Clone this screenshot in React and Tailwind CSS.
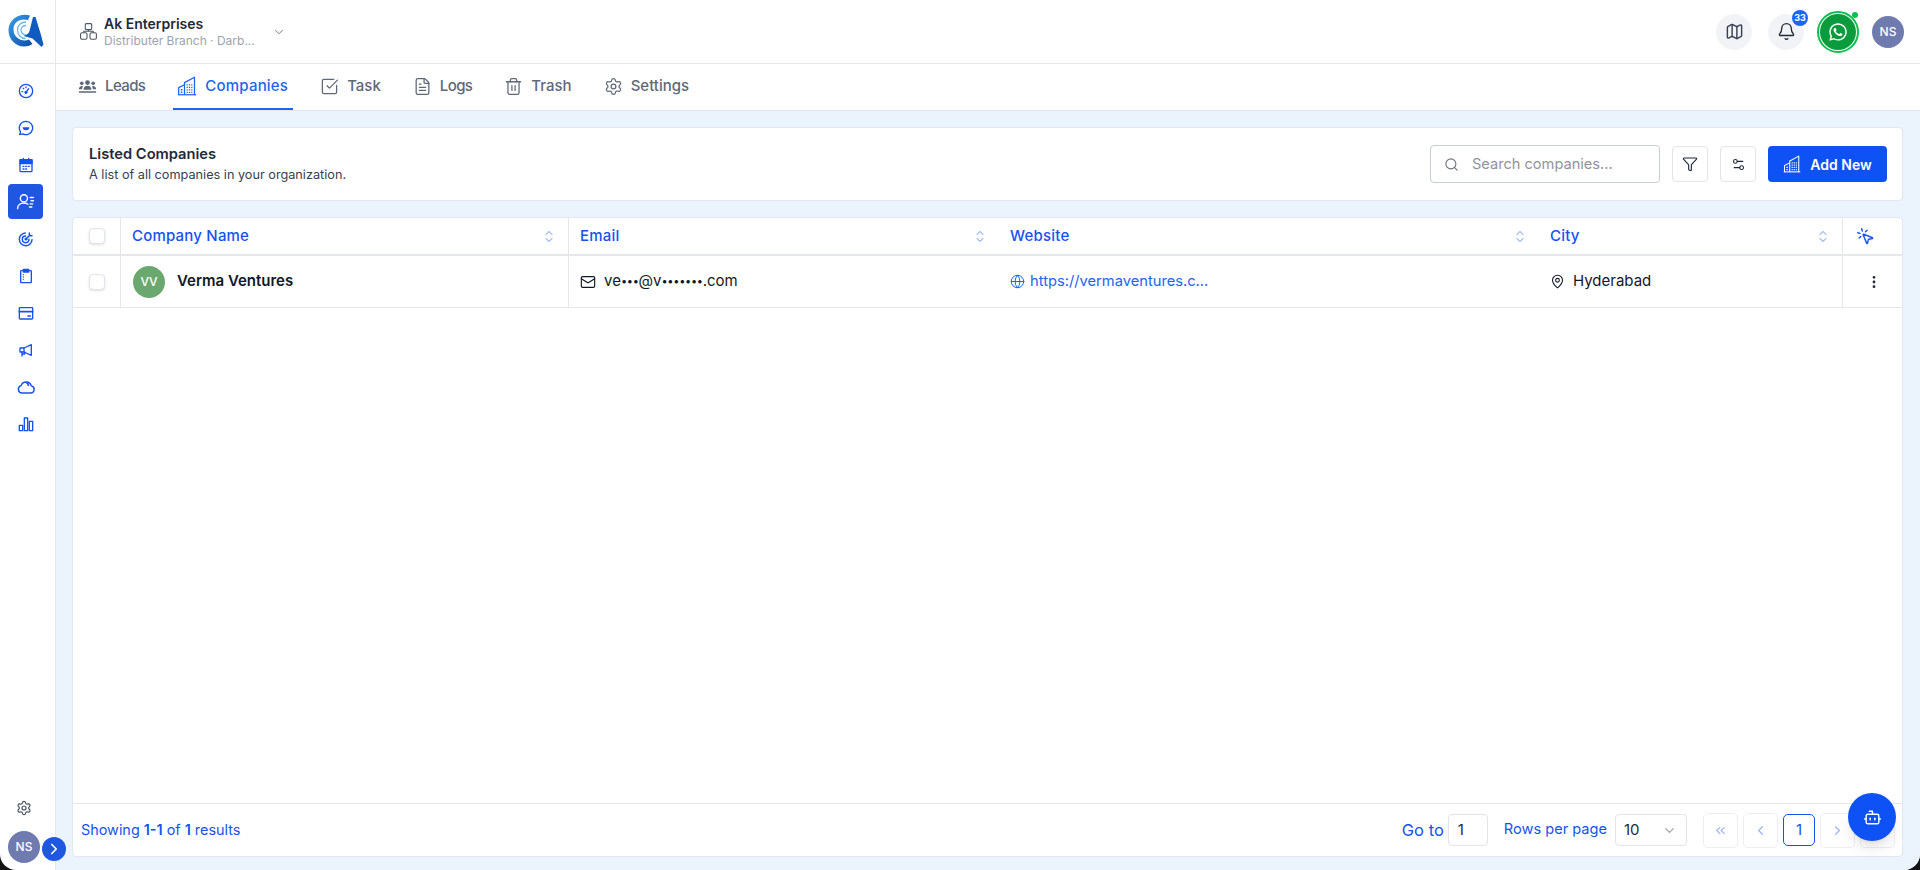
import React from "react";
import {
  SquareCheckBig, FileText, Trash2, Settings, ChevronDown, ChevronRight, ChevronLeft,
  ChevronsLeft, Map, Bell, Search, Funnel, Settings2, Mail, Globe, MapPin, MoreVertical, MousePointerClick, Bot,
} from "lucide-react";
import { FaWhatsapp } from "react-icons/fa";

function Ico({ children, size = 16, sw = 2 }) {
  return (
    <svg width={size} height={size} viewBox="0 0 24 24" fill="none" stroke="currentColor" strokeWidth={sw} strokeLinecap="round" strokeLinejoin="round">
      {children}
    </svg>
  );
}

const IconGauge = () => (
  <Ico>
    <circle cx="12" cy="12" r="10" />
    <path d="M12 14l4-5.500" />
    <circle cx="12" cy="14" r="1.500" fill="currentColor" />
    <path d="M6 13h1M8 8l.5.5M12 6v1" />
  </Ico>
);
const IconChat = () => (
  <Ico>
    <path d="M12 2a10 10 0 1 1-5 18.700L2.500 22l1.300-4.300A10 10 0 0 1 12 2z" />
    <path d="M7 11h10a5 4.500 0 0 1-10 0z" fill="currentColor" stroke="none" />
  </Ico>
);
const IconCal = () => (
  <Ico>
    <rect x="3" y="4" width="18" height="18" rx="1.500" />
    <rect x="3" y="4" width="18" height="6" fill="currentColor" />
    <path d="M8 2v3M16 2v3M7.500 14h1.500M11.500 14h1.500M15.500 14h1.500M7.500 18h1.500M11.500 18h1.500" />
  </Ico>
);
const IconLeadUser = () => (
  <Ico size={19} sw={1.8}>
    <circle cx="10" cy="8" r="4.500" />
    <path d="M2 21c0-4.500 3.500-7 8-7 2 0 3.500.5 5 1.500" />
    <path d="M18 7h4M19 11h3M18 15h3M17 19h3" />
  </Ico>
);
const IconTarget = () => (
  <Ico sw={2.2}>
    <path d="M11 3a9.500 9.500 0 1 0 10 10" />
    <path d="M11.500 7.500a5 5 0 1 0 5 5" />
    <circle cx="12" cy="12" r="1.300" fill="currentColor" />
    <path d="M12 12l6-6M17 3v4h4" />
  </Ico>
);
const IconClip = () => (
  <Ico>
    <rect x="4" y="4" width="16" height="18" rx="1" />
    <rect x="8" y="2" width="8" height="4" fill="currentColor" />
    <path d="M8 10h.01M8 13.500h.01M8 17h.01" />
  </Ico>
);
const IconPanel = () => (
  <Ico>
    <rect x="2" y="4" width="20" height="17" rx="1" />
    <path d="M2 10h20" strokeWidth="2.500" />
    <path d="M15 16.500h3.500" strokeWidth="2.500" />
  </Ico>
);
const IconMega = () => (
  <Ico>
    <path d="M3 9h6l11-5v16L9 15H3z" />
    <path d="M9 9v6M6 15v6M10 15v3H6" />
  </Ico>
);
const IconCloud = () => (
  <Ico size={18}>
    <path d="M7 20a5 5 0 0 1-1.500-9.800A7 7 0 0 1 19 10.500 4.800 4.800 0 0 1 18 20z" />
    <path d="M12 6a4 4 0 0 1 3 4" />
  </Ico>
);
const IconBars = () => (
  <Ico>
    <rect x="2" y="14" width="5" height="8" />
    <rect x="9.500" y="3" width="5" height="19" />
    <rect x="17" y="8" width="5" height="14" />
  </Ico>
);

function IconLeads({ size }) {
  return (
    <svg width={size} height={size} viewBox="0 0 24 24" fill="currentColor">
      <circle cx="12" cy="7" r="3" />
      <circle cx="4.800" cy="8" r="2.300" />
      <circle cx="19.200" cy="8" r="2.300" />
      <path d="M7 16c0-3 2-5 5-5s5 2 5 5z" />
      <path d="M1 15.500c0-2 1.800-4 3.800-4 .8 0 1.500.2 1.500.2C5.500 13 5.200 14.300 5.200 15.500z" />
      <path d="M23 15.500c0-2-1.800-4-3.800-4-.8 0-1.500.2-1.500.2.800 1.300 1.100 2.600 1.100 3.800z" />
      <rect x="1" y="18" width="22" height="2" rx="0.500" />
    </svg>
  );
}

function IconBuilding({ size = 19, sw = 1.5 }) {
  return (
    <svg width={size} height={size} viewBox="0 0 24 24" fill="none" stroke="currentColor" strokeWidth={sw} strokeLinejoin="round">
      <path d="M1 22.500h22" />
      <path d="M2 22.500V14l7-3.500" />
      <path d="M9 22.500V8L21 1.500v21" />
      <path d="M4.500 16.500h2M4.500 19.500h2" strokeWidth="1.700" />
      <path d="M11.500 10.500h7M11.500 13.500h7M11.500 16.500h7M11.500 19.500h7" strokeWidth="1.500" strokeDasharray="1.500 1.300" />
    </svg>
  );
}

function IconNetwork() {
  return (
    <svg width="17" height="17" viewBox="0 0 17 17" fill="none" stroke="currentColor" strokeWidth="1.100">
      <rect x="5.300" y="0.600" width="6.400" height="6" rx="1" />
      <rect x="0.600" y="9.800" width="6.400" height="6.400" rx="1.500" />
      <rect x="10" y="9.800" width="6.400" height="6.400" rx="1.500" />
      <path d="M8.500 6.600v1.700M3.800 9.800v-1.500h9.400v1.500" />
    </svg>
  );
}

function SortIcon() {
  return (
    <svg width="8" height="13" viewBox="0 0 8 13" fill="none" stroke="#a9bff6" strokeWidth="1.100" strokeLinecap="round" strokeLinejoin="round">
      <path d="M1 4.500L4 1.500l3 3" />
      <path d="M1 8.500l3 3 3-3" />
    </svg>
  );
}

function Side({ Icon }) {
  return (
    <div className="h-[37px] flex items-center justify-center text-[#1652f0]">
      <Icon />
    </div>
  );
}

function Tab({ icon, label, active, track }) {
  return (
    <div className={`h-[46px] flex items-center gap-[8px] pl-[4px] pr-[5px] border-b-2 ${active ? "border-[#1c64f2] text-[#1c64f2]" : "border-transparent text-[#5f6878]"}`}>
      {icon}
      <span className={`text-[15px] font-medium ${track}`}>{label}</span>
    </div>
  );
}

function Check() {
  return <span className="block w-[16px] h-[16px] rounded-[4px] border border-[#e1e4ec] bg-white shadow-sm" />;
}

function HeadCell({ label, border }) {
  return (
    <div className={`flex items-center justify-between pl-[11px] pr-[15px] ${border ? "border-r border-[#e5e7eb]" : ""}`}>
      <span className="text-[15px] tracking-[0.2px] font-medium text-[#1652f0]">{label}</span>
      <SortIcon />
    </div>
  );
}

function PageBtn({ children, active }) {
  return (
    <div className={`rounded-[5px] border flex items-center justify-center ${active ? "w-[32px] h-[32px] border-[#1652f0] text-[#1652f0]" : "w-[35px] h-[35px] border-[#eceef2] text-[#9db8f5]"}`}>
      {children}
    </div>
  );
}

export default function App() {
  return (
    <div className="w-full h-[870px] bg-[#141414]" style={{ fontFamily: "Inter, 'Noto Sans', sans-serif" }}>
      <div className="w-full h-full flex bg-white rounded-b-[16px] overflow-hidden">
        {/* Sidebar */}
        <aside className="w-[56px] shrink-0 border-r border-[#e5e7eb] flex flex-col">
          <div className="h-[64px] border-b border-[#e5e7eb] flex items-center justify-start pl-[8px]">
            <svg width="36" height="35" viewBox="0 0 36 35">
              <defs>
                <linearGradient id="lg" x1="0" y1="0" x2="1" y2="1">
                  <stop offset="0" stopColor="#3aa0e8" />
                  <stop offset="1" stopColor="#0b4aa8" />
                </linearGradient>
              </defs>
              <path d="M22 1.500C12 -1.500 1 5 0.500 15.500c-.4 9.500 7 17 15.500 17 3 0 6-.8 8.500-2.500L21 25.500c-6 3-15.500-1-15.500-10C5.500 8 12 4 20 6z" fill="url(#lg)" />
              <path d="M18 8c-5 0-8.500 3.500-8.500 8s3.500 8.500 8 8.500" fill="none" stroke="#6db5ec" strokeWidth="1.300" />
              <path d="M18 11.500c-3 0-5 2-5 4.500s2 5 5 5" fill="none" stroke="#6db5ec" strokeWidth="1.300" />
              <path d="M25 3l2.500 0 5.500 18 2.500 9.500-2 2.500-9-8.500-9-2.500c3-1 5.500-2.500 6-5z" fill="#0f5bbf" />
            </svg>
          </div>
          <div className="pt-[8px] flex flex-col pl-[8px] pr-[12px]">
            <Side Icon={IconGauge} />
            <Side Icon={IconChat} />
            <Side Icon={IconCal} />
            <div className="h-[35px] my-[1px] rounded-[4px] bg-[#1f57e0] text-white flex items-center justify-center">
              <IconLeadUser />
            </div>
            <Side Icon={IconTarget} />
            <Side Icon={IconClip} />
            <Side Icon={IconPanel} />
            <Side Icon={IconMega} />
            <Side Icon={IconCloud} />
            <Side Icon={IconBars} />
          </div>
          <div className="mt-auto flex flex-col items-center relative pb-[7px]">
            <Settings className="w-[16px] h-[16px] text-[#4b5563] mb-[15px] mr-[7px]" strokeWidth={1.8} />
            <div className="w-[32px] h-[32px] rounded-full bg-[#6f7bae] text-white text-[12px] font-medium flex items-center justify-center mr-[7px]">NS</div>
            <div className="absolute right-[-11px] bottom-[9px] w-[24px] h-[24px] rounded-full bg-[#1f57e0] flex items-center justify-center z-10">
              <ChevronRight className="w-[18px] h-[18px] text-white" strokeWidth={2.2} />
            </div>
          </div>
        </aside>

        {/* Main */}
        <div className="flex-1 min-w-0 flex flex-col">
          <header className="h-[64px] shrink-0 border-b border-[#e5e7eb] flex items-center pl-[24px] pr-[16px]">
            <span className="text-[#4b5563]"><IconNetwork /></span>
            <div className="ml-[7px] w-[160px]">
              <div className="text-[14px] font-semibold text-[#1f2937] leading-[18px]">Ak Enterprises</div>
              <div className="text-[12px] text-[#9ca3af] leading-[16px] whitespace-nowrap">Distributer Branch · Darb...</div>
            </div>
            <ChevronDown className="w-[14px] h-[14px] text-[#6b7280] ml-[8px]" strokeWidth={1.6} />
            <div className="ml-auto flex items-center">
              <div className="w-[36px] h-[36px] rounded-full bg-[#f1f3f7] flex items-center justify-center">
                <Map className="w-[19px] h-[19px] text-[#374151]" strokeWidth={1.8} />
              </div>
              <div className="relative ml-[16px] w-[36px] h-[36px] rounded-full bg-[#f1f3f7] flex items-center justify-center">
                <Bell className="w-[19px] h-[19px] text-[#1f2937]" strokeWidth={1.7} />
                <span className="absolute right-[-4px] top-[-4px] w-[16px] h-[16px] rounded-full bg-[#1c64f2] text-white text-[9px] font-bold flex items-center justify-center">33</span>
              </div>
              <div className="relative ml-[13px] w-[42px] h-[42px] rounded-full border-2 border-[#0cc04f] p-[1px]">
                <div className="w-full h-full rounded-full bg-[#0a9c3c] flex items-center justify-center">
                  <FaWhatsapp className="w-[20px] h-[20px] text-white" />
                </div>
                <span className="absolute right-[-1px] top-[-1px] w-[6px] h-[6px] rounded-full bg-[#0cc04f]" />
              </div>
              <div className="ml-[13px] w-[32px] h-[32px] rounded-full bg-[#6f7bae] text-white text-[12px] font-medium flex items-center justify-center">NS</div>
            </div>
          </header>

          <nav className="h-[47px] shrink-0 border-b border-[#e5e7eb] flex items-end pl-[18px] gap-[23px]">
            <Tab icon={<IconLeads size={19} />} label="Leads" track="tracking-[-0.6px]" />
            <Tab icon={<IconBuilding size={20} />} label="Companies" active track="tracking-[0.2px]" />
            <Tab icon={<SquareCheckBig className="w-[19px] h-[19px]" strokeWidth={1.6} />} label="Task" track="" />
            <Tab icon={<FileText className="w-[19px] h-[19px]" strokeWidth={1.6} />} label="Logs" track="tracking-[-0.6px]" />
            <Tab icon={<Trash2 className="w-[19px] h-[19px]" strokeWidth={1.6} />} label="Trash" track="" />
            <Tab icon={<Settings className="w-[19px] h-[19px]" strokeWidth={1.6} />} label="Settings" track="" />
          </nav>

          <main className="flex-1 min-h-0 bg-[#ebf3fd] pt-[16px] pl-[16px] pr-[17px] pb-[13px] flex flex-col gap-[16px]">
            <section className="h-[74px] shrink-0 bg-white rounded-[4px] border border-[#e2e6ee] flex items-center pl-[16px] pr-[15px]">
              <div className="pt-[2px]">
                <div className="text-[14.7px] font-semibold text-[#1f2937] leading-[20px]">Listed Companies</div>
                <div className="text-[12.7px] text-[#374151] leading-[22px]">A list of all companies in your organization.</div>
              </div>
              <div className="ml-auto flex items-center">
                <div className="w-[230px] h-[38px] rounded-[4px] border border-[#c8ccd4] flex items-center pl-[13px]">
                  <Search className="w-[15px] h-[15px] text-[#6b7280]" strokeWidth={1.8} />
                  <span className="ml-[13px] pt-[1px] text-[14.6px] text-[#8f95a0]">Search companies...</span>
                </div>
                <div className="ml-[12px] w-[36px] h-[36px] rounded-[4px] border border-[#e2e4e9] flex items-center justify-center">
                  <Funnel className="w-[16px] h-[16px] text-[#1f2937]" strokeWidth={1.7} />
                </div>
                <div className="ml-[12px] w-[36px] h-[36px] rounded-[4px] border border-[#e2e4e9] flex items-center justify-center">
                  <Settings2 className="w-[15px] h-[15px] text-[#1f2937]" strokeWidth={1.7} />
                </div>
                <div className="ml-[12px] w-[119px] h-[36px] rounded-[4px] bg-[#0e52f5] text-white flex items-center justify-center gap-[9px]">
                  <IconBuilding size={18} sw={1.4} />
                  <span className="text-[14px] font-semibold">Add New</span>
                </div>
              </div>
            </section>

            <section className="flex-1 min-h-0 bg-white rounded-[4px] border border-[#e2e6ee] flex flex-col">
              <div className="h-[38px] shrink-0 border-b-2 border-[#e5e7eb] grid grid-cols-[48px_448px_430px_540px_304px_61px]">
                <div className="flex items-center pl-[16px] border-r border-[#e5e7eb]"><Check /></div>
                <HeadCell label="Company Name" border />
                <HeadCell label="Email" />
                <HeadCell label="Website" />
                <HeadCell label="City" border />
                <div className="flex items-center pl-[13px]">
                  <MousePointerClick className="w-[19px] h-[19px] text-[#1652f0]" strokeWidth={1.8} />
                </div>
              </div>
              <div className="h-[52px] shrink-0 border-b border-[#e5e7eb] grid grid-cols-[48px_448px_430px_540px_304px_61px]">
                <div className="flex items-center pl-[16px] border-r border-[#e5e7eb]"><Check /></div>
                <div className="flex items-center pl-[12px] gap-[12px] border-r border-[#e5e7eb]">
                  <div className="w-[32px] h-[32px] rounded-full bg-[#6aa86f] text-white text-[12px] font-medium flex items-center justify-center">VV</div>
                  <span className="text-[15px] font-semibold text-[#111827]">Verma Ventures</span>
                </div>
                <div className="flex items-center pl-[11px] gap-[8px] text-[15px] text-[#111827]">
                  <Mail className="w-[16px] h-[16px]" strokeWidth={1.7} />
                  <span>ve<span className="text-[11px] tracking-[-0.3px] align-[1px]">•••</span>@v<span className="text-[11px] tracking-[-0.3px] align-[1px]">•••••••</span>.com</span>
                </div>
                <div className="flex items-center pl-[11px] gap-[5px] text-[14.7px] text-[#1c64f2]">
                  <Globe className="w-[15px] h-[15px]" strokeWidth={1.6} />
                  <span>https://vermaventures.c...</span>
                </div>
                <div className="flex items-center pl-[11px] gap-[8px] text-[15px] text-[#111827] border-r border-[#e5e7eb]">
                  <MapPin className="w-[15px] h-[15px]" strokeWidth={1.7} />
                  <span>Hyderabad</span>
                </div>
                <div className="flex items-center justify-center">
                  <MoreVertical className="w-[16px] h-[16px] text-[#1f2937]" strokeWidth={2.2} />
                </div>
              </div>
              <div className="flex-1" />
              <div className="h-[53px] shrink-0 border-t border-[#e5e7eb] flex items-center pl-[8px] relative">
                <div className="text-[14.4px] text-[#1652f0]">Showing <b className="font-semibold">1-1</b> of <b className="font-semibold">1</b> results</div>
                <div className="ml-auto flex items-center">
                  <span className="text-[16.5px] text-[#1652f0]">Go to</span>
                  <div className="ml-[4px] w-[40px] h-[32px] rounded-[4px] border border-[#e2e4e9] flex items-center pl-[9px] text-[15px] text-[#1f2937]">1</div>
                  <span className="ml-[16px] text-[14.6px] text-[#1652f0]">Rows per page</span>
                  <div className="ml-[8px] w-[72px] h-[32px] rounded-[4px] border border-[#e2e4e9] flex items-center justify-between pl-[8px] pr-[9px] text-[15px] text-[#1f2937]">
                    10<ChevronDown className="w-[15px] h-[15px] text-[#9ca3af]" />
                  </div>
                  <div className="ml-[16px] flex items-center gap-[5px] mr-[7px]">
                    <PageBtn><ChevronsLeft className="w-[15px] h-[15px]" /></PageBtn>
                    <PageBtn><ChevronLeft className="w-[15px] h-[15px]" /></PageBtn>
                    <PageBtn active><span className="text-[15px]">1</span></PageBtn>
                    <PageBtn><ChevronRight className="w-[15px] h-[15px]" /></PageBtn>
                    <PageBtn />
                  </div>
                </div>
                <div className="absolute right-[6px] bottom-[15px] w-[48px] h-[48px] rounded-full bg-[#0e52f5] flex items-center justify-center shadow-lg">
                  <Bot className="w-[19px] h-[19px] text-white" strokeWidth={1.8} />
                </div>
              </div>
            </section>
          </main>
        </div>
      </div>
    </div>
  );
}
